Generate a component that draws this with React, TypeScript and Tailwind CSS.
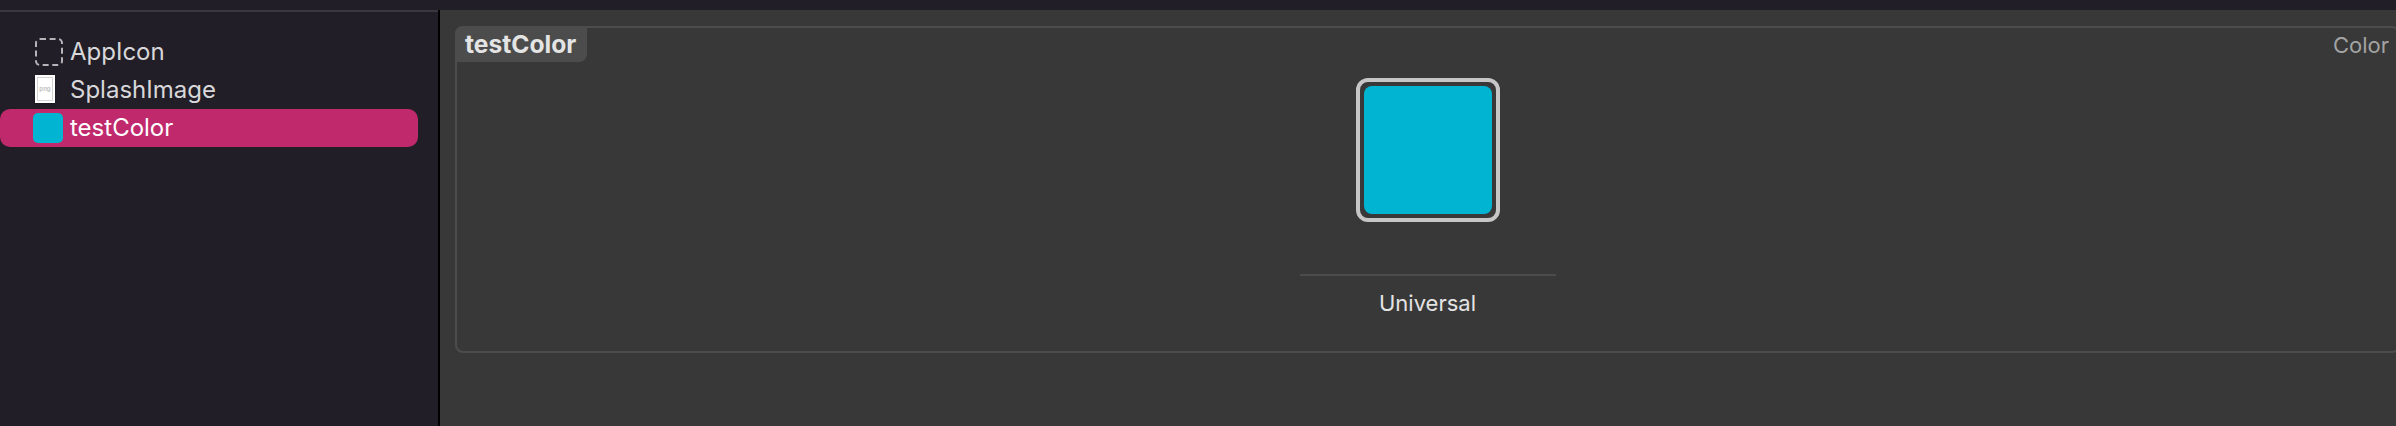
const font = { fontFamily: "Inter, 'Liberation Sans', sans-serif" }

function SplashThumb() {
  return (
    <div className="-mt-0.5 flex h-7 w-5 items-center justify-center bg-white shadow-sm">
      <div className="flex h-6 w-4 items-center justify-center border border-[#d4d4d4] text-[6px] leading-none font-bold text-[#c4c4c4]">
        png
      </div>
    </div>
  )
}

function AppIconThumb() {
  return <div className="h-7 w-7 rounded-[5px] border-2 border-dashed border-[#b5b4b8]" />
}

function Row({ icon, label, selected }: { icon: React.ReactNode; label: string; selected?: boolean }) {
  return (
    <div
      className={
        selected
          ? "flex h-[38px] w-[418px] items-center rounded-[10px] bg-[#c02a6d] pl-[33px] text-white"
          : "flex h-[38px] w-[418px] items-center pl-[33px] text-[#d8d7da]"
      }
    >
      <div className="flex w-[37px] shrink-0 items-center pl-0.5">{icon}</div>
      <span className="text-[24px] leading-none">{label}</span>
    </div>
  )
}

export default function App() {
  return (
    <div className="flex h-[426px] w-[2396px] flex-col overflow-hidden bg-[#383838]" style={font}>
      <div className="h-[10px] shrink-0 bg-[#211e27]" />
      <div className="flex min-h-0 flex-1">
        <aside className="w-[440px] shrink-0 border-r-2 border-black bg-[#211e27]">
          <div className="h-0.5 bg-[#3a3740]" />
          <div className="pt-[21px]">
            <Row icon={<AppIconThumb />} label="AppIcon" />
            <Row icon={<SplashThumb />} label="SplashImage" />
            <Row
              selected
              icon={<div className="-ml-0.5 h-[30px] w-[30px] rounded-[5px] bg-[#00b4d2]" />}
              label="testColor"
            />
          </div>
        </aside>
        <main className="min-w-0 flex-1 overflow-hidden pl-[15px] pt-4">
          <section className="h-[327px] w-[1945px] rounded-t-lg rounded-b-lg border-2 border-[#4c4c4c]">
            <div className="flex items-start justify-between">
              <div className="-ml-0.5 -mt-0.5 flex h-[36px] w-[132px] items-center rounded-tl-lg rounded-br-lg bg-[#4c4c4c] pl-2.5 text-[24.6px] leading-none font-bold text-[#e4e4e4]">
                testColor
              </div>
              <span className="mt-[6px] mr-[9px] text-[22px] leading-none text-[#a3a3a3]">Color</span>
            </div>
            <div className="flex flex-col items-center pt-4">
              <div className="flex h-36 w-36 items-center justify-center rounded-xl border-4 border-[#c6c6c6]">
                <div className="h-32 w-32 rounded-lg bg-[#00b4d2]" />
              </div>
              <div className="mt-[52px] h-0.5 w-64 bg-[#4c4c4c]" />
              <span className="mt-[15px] text-[22px] leading-6 text-[#e4e4e4]">Universal</span>
            </div>
          </section>
        </main>
      </div>
    </div>
  )
}
